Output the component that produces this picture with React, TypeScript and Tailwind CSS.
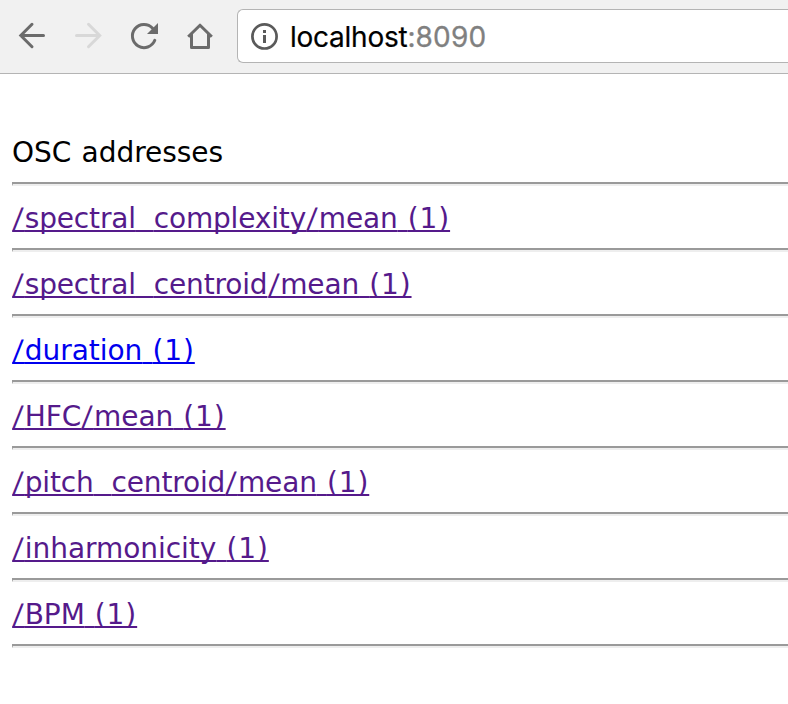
const rows = [
  { label: '/spectral_complexity/mean', tone: 'text-[#551a8b] tracking-[-0.16px]' },
  { label: '/spectral_centroid/mean', tone: 'text-[#551a8b] tracking-[-0.15px]' },
  { label: '/duration', tone: 'text-[#0000ee] tracking-[-0.03px]' },
  { label: '/HFC/mean', tone: 'text-[#551a8b] tracking-[-0.06px]' },
  { label: '/pitch_centroid/mean', tone: 'text-[#551a8b] tracking-[-0.15px]' },
  { label: '/inharmonicity', tone: 'text-[#551a8b] tracking-[-0.04px]' },
  { label: '/BPM', tone: 'text-[#551a8b] tracking-[-0.1px]' },
];

function Divider() {
  return <div className="h-1 border-t-2 border-b-2 border-t-[#9a9a9a] border-b-[#eeeeee] border-l border-l-[#9a9a9a]" />;
}

// Slashes lean a little further and underscores sit inside the link underline.
function Address({ label }: { label: string }) {
  return label.split(/([/_])/).map((part, i) => {
    if (part === '/') {
      return (
        <span key={i} className="inline-block origin-[0_31px] -skew-x-[5deg] tracking-[3.3px] underline decoration-2 underline-offset-2 [text-decoration-skip-ink:none]">/</span>
      );
    }
    if (part === '_') {
      return <span key={i} className="text-[12px] tracking-[11.8px]">_</span>;
    }
    return part;
  });
}

function NavIcons() {
  return (
    <svg className="block h-[73px] w-[237px] shrink-0" viewBox="0 0 237 73" fill="none" stroke="#6b6b6b" strokeWidth="3">
      <path d="M32 24.3 20.8 35.5 32 46.7M21 35.5H43.5" strokeLinecap="round" />
      <path d="M88.5 24.3 99.7 35.5 88.5 46.7M99 35.5H76.5" stroke="#d8d8d8" strokeLinecap="round" />
      <path d="M152.6 28.2A11.6 11.6 0 1 0 154.8 40.3" strokeLinecap="round" />
      <path d="M158 23V34H147Z" fill="#6b6b6b" stroke="none" />
      <path d="M188.2 36.8 200 25.2 211.8 36.8M191.5 34V47.5H208.5V34" strokeLinejoin="round" />
    </svg>
  );
}

export default function App() {
  return (
    <div className="h-[704px] w-[788px] overflow-hidden bg-white">
      <header className="flex h-[74px] border-b border-[#b4b4b4] bg-[#f1f1f1]">
        <NavIcons />
        <div className="mt-[9px] flex h-[54px] flex-1 items-center rounded-l-[6px] border border-r-0 border-[#b4b4b4] bg-white pl-[13px]">
          <svg className="h-7 w-7 shrink-0" viewBox="0 0 28 28" fill="none">
            <circle cx="13.5" cy="14.4" r="12.1" stroke="#5a5a5a" strokeWidth="2.7" />
            <path d="M12 8H15V11H12ZM12 13H15V21H12Z" fill="#5a5a5a" />
          </svg>
          <div className="ml-[11px] flex pt-0.5 font-['Inter',sans-serif] text-[28px] leading-[34px] whitespace-nowrap">
            <span className="tracking-[-0.25px] text-black [-webkit-text-stroke:0.2px_black]">localhost</span>
            <span className="tracking-[0.15px] text-[#808080] [-webkit-text-stroke:0.3px_#808080]">:8090</span>
          </div>
        </div>
      </header>
      <main className="pt-[62px] pl-3 font-['DejaVu_Sans',sans-serif] text-[28px] leading-[34px] whitespace-nowrap">
        <div className="mb-3 tracking-[-0.04px] [word-spacing:1.5px] text-black">OSC addresses</div>
        <Divider />
        {rows.map((row) => (
          <div key={row.label}>
            <div className="h-[62px] pt-4">
              <a className={`${row.tone} underline decoration-2 underline-offset-2 [text-decoration-skip-ink:none]`}>
                <Address label={row.label} />
                <span className="tracking-[1.2px]"> </span>
                <span className="tracking-[0.9px]">(1)</span>
              </a>
            </div>
            <Divider />
          </div>
        ))}
      </main>
    </div>
  );
}
